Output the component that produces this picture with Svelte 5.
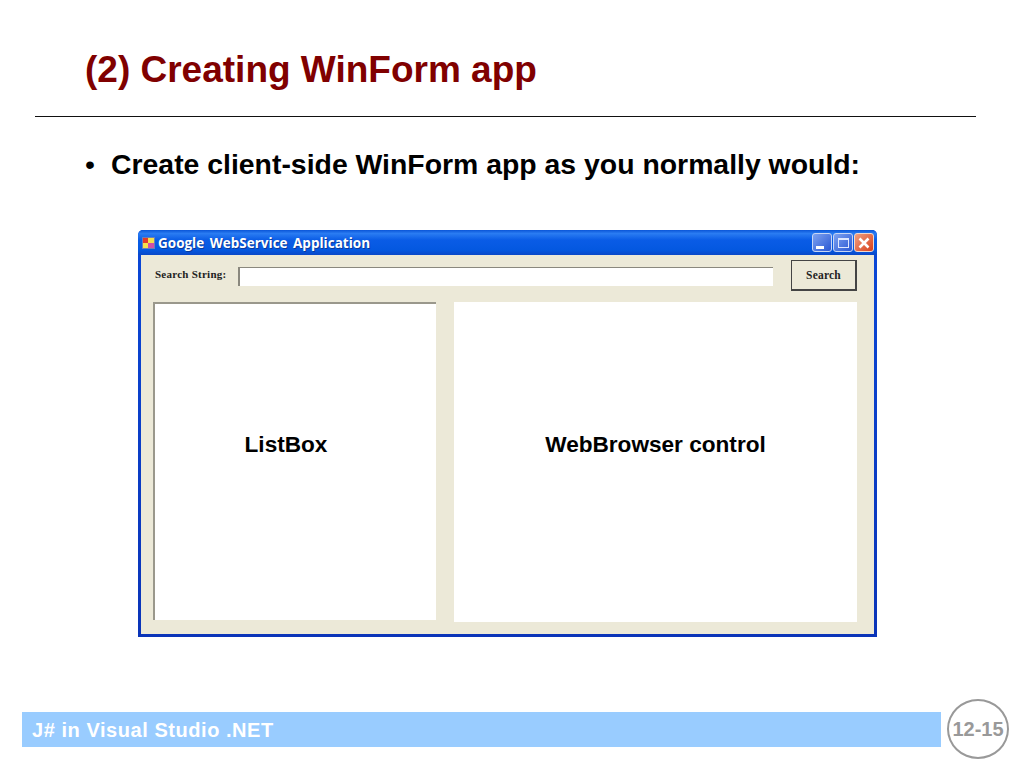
<script lang="ts">
	let pageNumber = '12-15';
</script>

<div class="slide">
	<h1>(2) Creating WinForm app</h1>
	<div class="rule"></div>

	<div class="bullet">
		<span class="dot">•</span>
		<span>Create client-side WinForm app as you normally would:</span>
	</div>

	<div class="window">
		<div class="titlebar">
			<svg class="app-icon" width="13" height="12" viewBox="0 0 13 12">
				<rect width="13" height="12" fill="#6a7db8" />
				<rect x="1" y="1" width="5" height="5" fill="#e23a2a" />
				<rect x="6" y="1" width="6" height="5" fill="#f4e04a" />
				<rect x="1" y="6" width="5" height="5" fill="#f4e04a" />
				<rect x="6" y="6" width="6" height="5" fill="#d050a8" />
			</svg>
			<span class="caption">Google WebService Application</span>
			<div class="controls">
				<div class="ctl min"><span></span></div>
				<div class="ctl max"><span></span></div>
				<div class="ctl close">
					<svg width="14" height="14" viewBox="0 0 14 14">
						<path d="M2.5 2.5 L11.5 11.5 M11.5 2.5 L2.5 11.5" stroke="#fff" stroke-width="2.6" />
					</svg>
				</div>
			</div>
		</div>

		<div class="client">
			<div class="search-row">
				<span class="label">Search String:</span>
				<div class="input"></div>
				<div class="button">Search</div>
			</div>
			<div class="panes">
				<div class="listbox">ListBox</div>
				<div class="browser">WebBrowser control</div>
			</div>
		</div>
	</div>

	<div class="footer">
		<div class="bar">J# in Visual Studio .NET</div>
		<div class="page">{pageNumber}</div>
	</div>
</div>

<style>
	:global(body) {
		background: #fff;
	}

	.slide {
		width: 1024px;
		height: 768px;
		box-sizing: border-box;
		overflow: hidden;
		background: #fff;
		font-family: 'Liberation Sans', Arial, sans-serif;
		display: flex;
		flex-direction: column;
	}

	h1 {
		margin: 0;
		padding: 49px 0 0 85px;
		height: 67px;
		font-size: 37px;
		line-height: 42px;
		font-weight: bold;
		color: #800000;
	}

	.rule {
		height: 1px;
		margin: 0 48px 0 35px;
		background: #111;
	}

	.bullet {
		display: flex;
		margin: 31px 0 0 85px;
		font-size: 28.4px;
		line-height: 32px;
		font-weight: bold;
		color: #000;
	}

	.dot {
		width: 26px;
		font-weight: normal;
		flex-shrink: 0;
	}

	.window {
		width: 739px;
		height: 407px;
		box-sizing: border-box;
		margin: 50px 0 0 138px;
		display: flex;
		flex-direction: column;
		background: linear-gradient(#0a48d8, #0a34b8);
		border-radius: 5px 5px 0 0;
		padding: 0 3px 3px;
	}

	.titlebar {
		height: 25px;
		flex-shrink: 0;
		margin: 0 -3px;
		padding: 0 3px 0 4px;
		display: flex;
		align-items: center;
		border-radius: 5px 5px 0 0;
		background: linear-gradient(#0a55d8 0%, #2a7cf2 14%, #0a5ce6 40%, #0458e0 80%, #0a48c8 100%);
	}

	.app-icon {
		flex-shrink: 0;
		margin-right: 3px;
	}

	.caption {
		font-family: 'Open Sans', 'DejaVu Sans', sans-serif;
		font-size: 13.5px;
		font-weight: bold;
		word-spacing: 2px;
		color: #fff;
		text-shadow: 1px 1px 0 #0a3a9a;
		white-space: nowrap;
	}

	.controls {
		margin-left: auto;
		display: flex;
		gap: 1px;
	}

	.ctl {
		width: 20px;
		height: 19px;
		box-sizing: border-box;
		border: 1px solid #c8d6f4;
		border-radius: 3px;
		position: relative;
		display: flex;
		align-items: center;
		justify-content: center;
		background: linear-gradient(135deg, #7ea2f0, #2a58d4);
	}

	.ctl.close {
		border-color: #f0d8cc;
		background: linear-gradient(135deg, #f0a080, #d8401c);
	}

	.min span {
		position: absolute;
		left: 3px;
		bottom: 2px;
		width: 8px;
		height: 3px;
		background: #fff;
	}

	.max span {
		width: 11px;
		height: 10px;
		box-sizing: border-box;
		border: 1px solid #dfe8ff;
		border-top-width: 2px;
	}

	.client {
		flex: 1;
		display: flex;
		flex-direction: column;
		background: #ece9d8;
		padding: 5px 17px 11px 12px;
	}

	.search-row {
		display: flex;
		align-items: center;
		height: 31px;
		flex-shrink: 0;
		padding-left: 2px;
	}

	.label {
		width: 83px;
		flex-shrink: 0;
		margin-top: -3px;
		font-family: 'Liberation Serif', serif;
		font-size: 11px;
		font-weight: bold;
		letter-spacing: 0.25px;
		color: #222;
		white-space: nowrap;
	}

	.input {
		width: 535px;
		height: 19px;
		box-sizing: border-box;
		margin-top: 2px;
		background: #fff;
		border-top: 1px solid #8a887e;
		border-left: 2px solid #8a887e;
	}

	.button {
		width: 66px;
		height: 31px;
		box-sizing: border-box;
		margin-left: auto;
		display: flex;
		align-items: center;
		justify-content: center;
		background: #ece9d8;
		border: 1px solid #444;
		border-right-width: 2px;
		border-bottom-width: 2px;
		font-family: 'Liberation Serif', serif;
		font-size: 11.5px;
		font-weight: bold;
		letter-spacing: 0.2px;
		color: #222;
	}

	.panes {
		flex: 1;
		margin-top: 11px;
		display: flex;
		align-items: flex-start;
		justify-content: space-between;
	}

	.listbox,
	.browser {
		display: flex;
		align-items: center;
		justify-content: center;
		background: #fff;
		font-size: 22.6px;
		font-weight: bold;
		color: #000;
	}

	.listbox {
		width: 283px;
		height: 318px;
		box-sizing: border-box;
		border-top: 2px solid #9a988c;
		border-left: 2px solid #9a988c;
		padding: 0 19px 34px 0;
	}

	.browser {
		width: 403px;
		height: 320px;
		padding-bottom: 34px;
		box-sizing: border-box;
	}

	.footer {
		margin-top: auto;
		height: 60px;
		margin-bottom: 9px;
		display: flex;
		align-items: center;
		padding-left: 22px;
		gap: 6px;
	}

	.bar {
		width: 919px;
		height: 35px;
		box-sizing: border-box;
		padding-left: 10px;
		background: #99ccff;
		color: #fff;
		font-size: 20px;
		letter-spacing: 0.55px;
		font-weight: bold;
		line-height: 37px;
	}

	.page {
		width: 62px;
		height: 60px;
		flex-shrink: 0;
		box-sizing: border-box;
		border: 2px solid #999;
		border-radius: 50%;
		display: flex;
		align-items: center;
		justify-content: center;
		color: #999;
		font-size: 20px;
		font-weight: bold;
		white-space: nowrap;
	}
</style>
